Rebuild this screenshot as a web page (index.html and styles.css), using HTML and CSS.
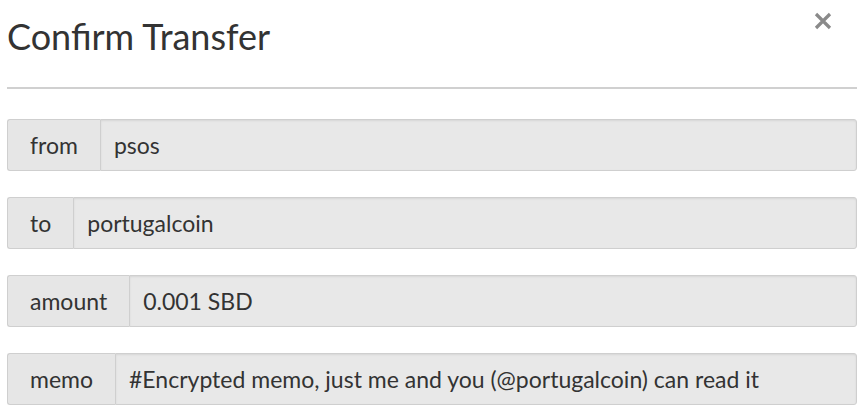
FILE: index.html
```html
<!DOCTYPE html>
<html>
<head>
<meta charset="utf-8">
<link rel="stylesheet" href="styles.css">
</head>
<body>
<div class="modal">
  <div class="header">
    <h1 class="title">Confirm Transfer</h1>
    <button class="close" aria-label="Close">
      <svg width="20" height="20" viewBox="0 0 20 20"><path d="M3 3 L17 17 M17 3 L3 17" stroke="#8a8a8a" stroke-width="3.2" stroke-linecap="butt"/></svg>
    </button>
  </div>
  <hr class="rule">
  <div class="fields">
    <div class="group"><span class="label">from</span><span class="value">psos</span></div>
    <div class="group"><span class="label">to</span><span class="value">portugalcoin</span></div>
    <div class="group"><span class="label">amount</span><span class="value">0.001 SBD</span></div>
    <div class="group"><span class="label">memo</span><span class="value">#Encrypted memo, just me and you (@portugalcoin) can read it</span></div>
  </div>
</div>
</body>
</html>
```
FILE: styles.css
```css
html, body { margin: 0; padding: 0; background: #fff; }
body { font-family: "Lato", "Open Sans", sans-serif; color: #333; }
.modal { padding: 0 9px 0 7px; }
.header { display: flex; justify-content: space-between; align-items: flex-start; }
.title { margin: 0; padding-top: 14px; font-size: 36px; font-weight: 400; line-height: 44px; color: #333; }
.close { border: 0; background: none; padding: 0; margin: 11px 24px 0 0; width: 20px; height: 20px; }
.close svg { display: block; }
.rule { border: 0; border-top: 2px solid #d0d0d0; margin: 29px 0 0 0; }
.fields { display: flex; flex-direction: column; gap: 26px; margin-top: 30px; }
.group { display: flex; height: 52px; font-size: 23px; }
.label { display: flex; align-items: center; padding: 0 22px; background: #e6e6e6; border: 1px solid #cfcfcf; border-right: 0; border-radius: 3px 0 0 3px; }
.value { flex: 1; display: flex; align-items: center; padding: 0 13px; background: #e8e8e8; border: 1px solid #cfcfcf; border-radius: 0 3px 3px 0; box-shadow: inset 0 1px 2px rgba(0,0,0,0.08); }
```
